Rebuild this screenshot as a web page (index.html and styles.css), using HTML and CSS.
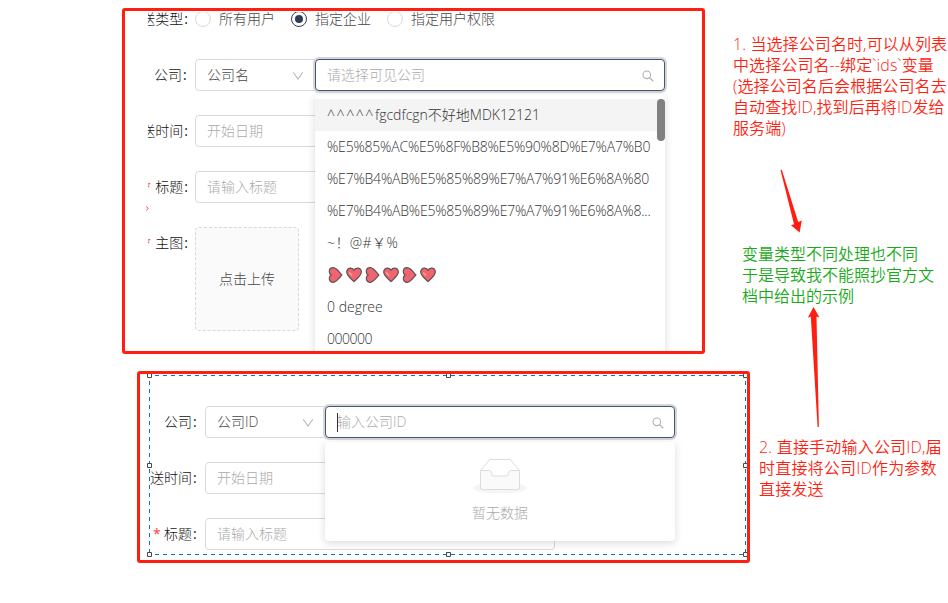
FILE: index.html
```html
<!DOCTYPE html>
<html lang="zh-CN">
<head>
<meta charset="utf-8">
<title>公司选择</title>
<link rel="stylesheet" href="styles.css">
</head>
<body>
<svg class="defs" width="0" height="0">
  <symbol id="down" viewBox="0 0 12 12"><path d="M1.200 2.200 6 9 10.800 2.200" fill="none" stroke="#b8b8b8" stroke-width="1.100"/></symbol>
  <symbol id="search" viewBox="0 0 12 12"><circle cx="4.800" cy="4.800" r="3.800" fill="none" stroke="#b0b0b0" stroke-width="1.100"/><path d="M7.600 7.600 11.200 11.200" stroke="#b0b0b0" stroke-width="1.300"/></symbol>
  <symbol id="heart" viewBox="0 0 16 16"><path d="M8 14.600C6 12.600.7 8.800.7 5.100.7 2.800 2.400 1.200 4.400 1.200 6 1.200 7.300 2 8 3.300 8.700 2 10 1.200 11.600 1.200 13.600 1.200 15.300 2.800 15.300 5.100 15.300 8.800 10 12.600 8 14.600Z" fill="#f1646f" stroke="#5b5355" stroke-width="1.200"/><path d="M3.200 5.500 6 8.500" stroke="#f8a58c" stroke-width="1.500"/></symbol>
  <symbol id="heart-side" viewBox="0 0 14 16"><path d="M13.300 8C11.400 10.200 8 15.300 4.800 15.300 2.400 15.300.8 13.700.8 11.500.8 10 1.400 8.700 2.600 8 1.400 7.300.8 6 .8 4.500.8 2.300 2.400.7 4.800.7 8 .7 11.400 5.800 13.300 8Z" fill="#f1646f" stroke="#5b5355" stroke-width="1.200"/></symbol>
</svg>
<main class="board">
  <section class="panel panel-name">
    <div class="form">
      <div class="row">
        <div class="label">送类型<i>:</i></div>
        <div class="radios">
          <span class="radio"><b></b>所有用户</span>
          <span class="radio on"><b></b>指定企业</span>
          <span class="radio"><b></b>指定用户权限</span>
        </div>
      </div>
      <div class="row">
        <div class="label">公司<i>:</i></div>
        <div class="box select">公司名<svg class="down"><use href="#down"/></svg></div>
        <div class="box search ph">请选择可见公司<svg class="glass"><use href="#search"/></svg>
          <div class="menu">
            <div class="item active"><span class="carets">^^^^^</span><span class="mixed">fgcdfcgn不好地MDK12121</span></div>
            <div class="item code">%E5%85%AC%E5%8F%B8%E5%90%8D%E7%A7%B0</div>
            <div class="item code">%E7%B4%AB%E5%85%89%E7%A7%91%E6%8A%80</div>
            <div class="item code">%E7%B4%AB%E5%85%89%E7%A7%91%E6%8A%8...</div>
            <div class="item signs">~！@#￥%</div>
            <div class="item hearts">
              <svg class="side"><use href="#heart-side"/></svg><svg><use href="#heart"/></svg>
              <svg class="side"><use href="#heart-side"/></svg><svg><use href="#heart"/></svg>
              <svg class="side"><use href="#heart-side"/></svg><svg><use href="#heart"/></svg>
            </div>
            <div class="item">0 degree</div>
            <div class="item zeros">000000</div>
            <div class="thumb"></div>
          </div>
        </div>
      </div>
      <div class="row"><div class="label">送时间<i>:</i></div><div class="box field ph">开始日期</div></div>
      <div class="row"><div class="label"><em>*</em>标题<i>:</i></div><div class="box field ph">请输入标题</div></div>
      <div class="row"><div class="label"><em>*</em>主图<i>:</i></div><div class="upload">点击上传</div></div>
    </div>
    <svg class="scrap" viewBox="0 0 3 5"><path d="M.5.5 2 2.500.5 4.500" fill="none" stroke="#ff3c38"/></svg>
  </section>

  <section class="panel panel-id">
    <div class="form">
      <div class="row">
        <div class="label">公司<i>:</i></div>
        <div class="box select">公司ID<svg class="down"><use href="#down"/></svg></div>
        <div class="box search ph"><span class="caret"></span>输入公司ID<svg class="glass"><use href="#search"/></svg>
          <div class="menu empty">
            <svg class="tray" viewBox="0 0 56 36">
              <ellipse cx="28" cy="30" rx="27" ry="5.500" fill="#f5f5f5"/>
              <path d="M8.500 12.500 18 1.500H38L47.500 12.500V29.500Q47.500 31.500 45.500 31.500H10.500Q8.500 31.500 8.500 29.500Z" fill="#fff" stroke="#dcdcdc"/>
              <path d="M8.500 12.500H17.500Q19.500 12.500 19.500 15.500T22 18H34Q36.500 18 36.500 15.500T38.500 12.500H47.500V29.500Q47.500 31.500 45.500 31.500H10.500Q8.500 31.500 8.500 29.500Z" fill="#fafafa" stroke="#dcdcdc"/>
            </svg>
            <div>暂无数据</div>
          </div>
        </div>
      </div>
      <div class="row"><div class="label">送时间<i>:</i></div><div class="box field ph">开始日期</div></div>
      <div class="row"><div class="label"><em>*</em>标题<i>:</i></div><div class="box field ph">请输入标题</div></div>
    </div>
    <svg class="selection" viewBox="0 0 607 186">
      <path d="M9 1.500H606M9 180.500H606M9.500 1V181M605.500 1V181" fill="none" stroke="#0078c8" stroke-dasharray="4 4" stroke-dashoffset="2"/>
      <g fill="#fff" stroke="#484848">
        <path d="M7.500-.5h4v4h-4zM306.500-.5h4v4h-4zM603.500-.5h4v4h-4zM7.500 89.500h4v4h-4zM603.500 89.500h4v4h-4zM7.500 178.500h4v4h-4zM306.500 178.500h4v4h-4zM603.500 178.500h4v4h-4z"/>
      </g>
    </svg>
  </section>

  <p class="note note-1"><span>1. 当选择公司名时,可以从列表</span><span>中选择公司名--绑定`ids`变量</span><span>(选择公司名后会根据公司名去</span><span>自动查找ID,找到后再将ID发给</span><span>服务端)</span></p>
  <p class="note note-2"><span>变量类型不同处理也不同</span><span>于是导致我不能照抄官方文</span><span>档中给出的示例</span></p>
  <p class="note note-3"><span>2. 直接手动输入公司ID,届</span><span>时直接将公司ID作为参数</span><span>直接发送</span></p>
  <svg class="arrows" viewBox="0 0 948 603" fill="#ff1e10">
    <path d="M780.500 170 781.800 169.800 798.200 222 801.800 220.500 799.600 232.400 791 225.200 794 224.300Z"/>
    <path d="M813.500 307 819.500 317.500 816.500 316.500 818.900 427H817.600L810.800 316.500 807.800 317.800Z"/>
  </svg>
</main>
</body>
</html>
```
FILE: styles.css
```css
* { box-sizing: border-box; }
body { margin: 0; background: #fff; font: 300 14px/22px "Open Sans", "Noto Sans CJK SC", sans-serif; color: #484848; }
.defs { position: absolute; }
.board { position: relative; width: 948px; height: 603px; overflow: hidden; }

.panel { position: absolute; border: 3px solid #ff1e10; border-radius: 3px; overflow: hidden; background: #fff; }
.panel-name { left: 122px; top: 8px; width: 583px; height: 346px; }
.panel-id { left: 137px; top: 371px; width: 613px; height: 192px; }
.form { display: flex; flex-direction: column; gap: 24px; overflow: hidden; height: 100%; }
.panel-name .form { margin-left: 23px; margin-top: 1px; }
.panel-name .row:first-child { margin-top: -9px; }
.panel-id .form { margin-left: 9px; padding-top: 32px; }
.row { display: flex; flex: none; min-height: 32px; }
.label { width: 47px; flex: none; display: flex; justify-content: flex-end; white-space: nowrap; line-height: 32px; color: #111; padding-right: 7px; }
.panel-id .label { width: 56px; }
.label i { font-style: normal; font-weight: 400; width: 6px; padding-left: 1px; }
.label em { font-style: normal; font-weight: 400; color: #ff3c38; margin-right: 5px; width: 6px; }
.panel-name .label em { margin-right: 6px; }

.radios { display: flex; line-height: 32px; }
.radio { display: flex; align-items: center; margin-right: 16px; white-space: nowrap; }
.radio b { width: 16px; height: 16px; border: 1px solid #d9d9d9; border-radius: 50%; margin-right: 8px; display: grid; place-items: center; }
.radio.on b { border-color: #2f3d54; }
.radio.on b::after { content: ""; width: 8px; height: 8px; border-radius: 50%; background: #2f3d54; }

.box { position: relative; height: 32px; border: 1px solid #d9d9d9; border-radius: 4px; line-height: 30px; padding-left: 11px; background: #fff; white-space: nowrap; flex: none; }
.ph { color: #aaa; }
.select { width: 120px; border-radius: 4px 0 0 4px; }
.field { width: 350px; }
.down { position: absolute; width: 12px; height: 12px; right: 10px; top: 10px; }
.glass { position: absolute; width: 12px; height: 12px; right: 10px; top: 10px; }
.search { width: 350px; border-color: #465468; box-shadow: 0 0 0 2px #d3d6dc; z-index: 2; }
.caret { position: absolute; left: 11px; top: 6px; width: 1px; height: 19px; background: #333; }

.menu { position: absolute; left: -1px; top: 35px; width: 350px; height: 270px; padding-top: 4px; background: #fff; border-radius: 4px; box-shadow: 0 2px 8px rgba(0,0,0,.15); color: #333; }
.item { height: 32px; line-height: 32px; padding-left: 12px; }
.item.active { background: #f4f4f4; }
.carets { letter-spacing: 1.6px; }
.code { letter-spacing: -.2px; }
.signs { letter-spacing: .4px; }
.zeros { letter-spacing: -.5px; }
.thumb { position: absolute; right: 0; top: 4px; width: 8px; height: 42px; border-radius: 4px; background: #808080; }
.hearts { display: flex; align-items: center; gap: 3px; padding-left: 13px; }
.hearts svg { width: 16px; height: 16px; }
.hearts .side { width: 15px; }
.empty { height: 99px; padding-top: 16px; display: flex; flex-direction: column; align-items: center; color: #aaa; line-height: 22px; }
.tray { width: 56px; height: 36px; margin-bottom: 8px; flex: none; }
.upload { width: 104px; height: 104px; border: 1px dashed #d9d9d9; border-radius: 4px; background: #fafafa; display: grid; place-items: center; }
.scrap { position: absolute; left: 21px; top: 195px; width: 3px; height: 5px; }
.selection { position: absolute; left: 0; top: 0; width: 607px; height: 186px; z-index: 4; }

.note { position: absolute; margin: 0; font-size: 16px; line-height: 21px; font-weight: 350; color: #ff1e10; }
.note span { display: block; white-space: nowrap; }
.note-1 { left: 733px; top: 34px; letter-spacing: .1px; }
.note-2 { left: 742px; top: 244px; color: #19aa19; }
.note-3 { left: 759px; top: 437px; letter-spacing: .2px; }
.arrows { position: absolute; left: 0; top: 0; width: 948px; height: 603px; pointer-events: none; }
```
